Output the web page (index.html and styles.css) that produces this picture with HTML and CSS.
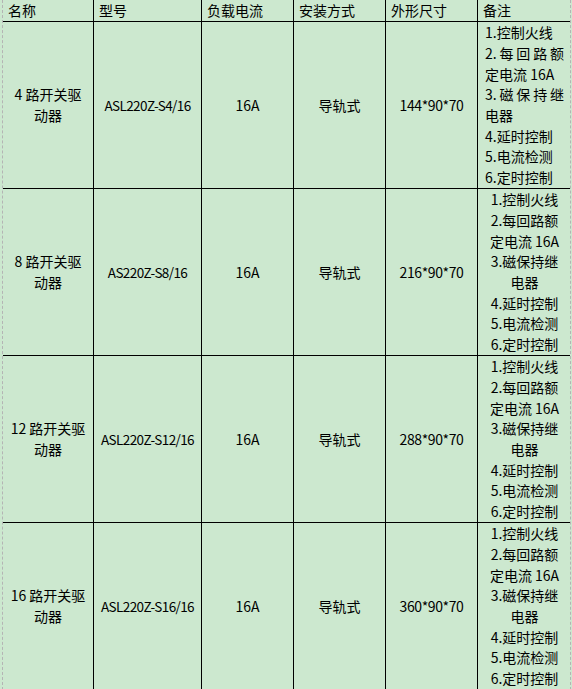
FILE: index.html
```html
<!DOCTYPE html>
<html lang="zh-CN">
<head>
<meta charset="utf-8">
<title>开关驱动器规格表</title>
<link rel="stylesheet" href="styles.css">
</head>
<body>
<div class="sheet">
  <div class="grid">
    <div class="th">名称</div>
    <div class="th">型号</div>
    <div class="th">负载电流</div>
    <div class="th">安装方式</div>
    <div class="th">外形尺寸</div>
    <div class="th">备注</div>

    <div class="td name">4 路开关驱动器</div>
    <div class="td code">ASL220Z-S4/16</div>
    <div class="td">16A</div>
    <div class="td">导轨式</div>
    <div class="td num">144*90*70</div>
    <div class="td note note-justify">
      <p>1.控制火线</p>
      <p>2.每回路额定电流 16A</p>
      <p>3.磁保持继电器</p>
      <p>4.延时控制</p>
      <p>5.电流检测</p>
      <p>6.定时控制</p>
    </div>

    <div class="td name">8 路开关驱动器</div>
    <div class="td code">AS220Z-S8/16</div>
    <div class="td">16A</div>
    <div class="td">导轨式</div>
    <div class="td num">216*90*70</div>
    <div class="td note">
      <p>1.控制火线</p>
      <p>2.每回路额定电流 16A</p>
      <p>3.磁保持继电器</p>
      <p>4.延时控制</p>
      <p>5.电流检测</p>
      <p>6.定时控制</p>
    </div>

    <div class="td name">12 路开关驱动器</div>
    <div class="td code">ASL220Z-S12/16</div>
    <div class="td">16A</div>
    <div class="td">导轨式</div>
    <div class="td num">288*90*70</div>
    <div class="td note">
      <p>1.控制火线</p>
      <p>2.每回路额定电流 16A</p>
      <p>3.磁保持继电器</p>
      <p>4.延时控制</p>
      <p>5.电流检测</p>
      <p>6.定时控制</p>
    </div>

    <div class="td name">16 路开关驱动器</div>
    <div class="td code">ASL220Z-S16/16</div>
    <div class="td">16A</div>
    <div class="td">导轨式</div>
    <div class="td num">360*90*70</div>
    <div class="td note">
      <p>1.控制火线</p>
      <p>2.每回路额定电流 16A</p>
      <p>3.磁保持继电器</p>
      <p>4.延时控制</p>
      <p>5.电流检测</p>
      <p>6.定时控制</p>
    </div>
  </div>
</div>
</body>
</html>
```

FILE: styles.css
```css
html, body {
  margin: 0;
  padding: 0;
  background: #cce8cf;
}

body {
  font-family: "Noto Sans CJK SC", sans-serif;
  font-size: 14px;
  color: #000;
  overflow: hidden;
}

.sheet {
  margin-left: 2px;
  width: 567px;
  border-left: 1px dashed #b4b4b4;
  border-right: 1px dashed #b4b4b4;
  min-height: 689px;
}

.grid {
  display: grid;
  grid-template-columns: 91px 108px 92px 92px 92px 92px;
  grid-template-rows: 22px repeat(4, 167px);
}

.th,
.td {
  box-sizing: border-box;
  border-right: 1px solid #000;
  border-bottom: 1px solid #000;
  line-height: 20.7px;
}

.th:nth-child(6n),
.td:nth-child(6n) {
  border-right: none;
}

.th {
  display: flex;
  align-items: center;
  padding: 0 5px;
}

.td {
  display: flex;
  align-items: center;
  justify-content: center;
  text-align: center;
  padding: 0 5px;
}

.code {
  white-space: nowrap;
  padding: 0;
  font-size: 13.5px;
  letter-spacing: -0.6px;
}

.num {
  letter-spacing: -0.4px;
}

.note {
  flex-direction: column;
  justify-content: center;
  align-items: stretch;
  padding: 0 6px 0 7px;
}

.note p {
  margin: 0;
}

.note-justify {
  text-align: justify;
}
```
